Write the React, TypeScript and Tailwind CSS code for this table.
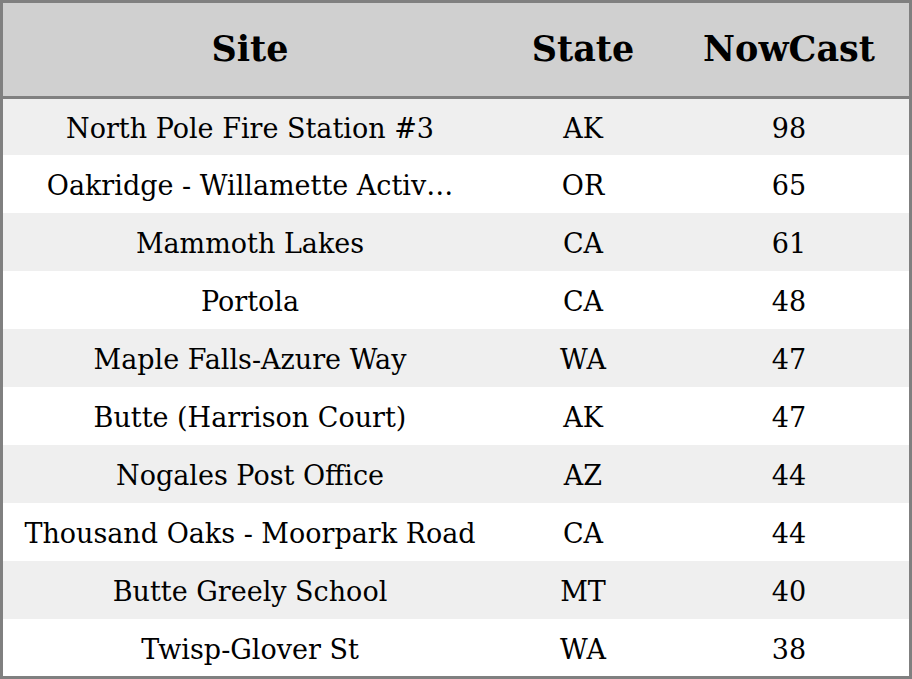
const rows = [
  { site: "North Pole Fire Station #3", state: "AK", value: 98, h: "h-[56px]" },
  { site: "Oakridge - Willamette Activ…", state: "OR", value: 65, h: "h-[58px]" },
  { site: "Mammoth Lakes", state: "CA", value: 61, h: "h-[58px]" },
  { site: "Portola", state: "CA", value: 48, h: "h-[58px]" },
  { site: "Maple Falls-Azure Way", state: "WA", value: 47, h: "h-[58px]" },
  { site: "Butte (Harrison Court)", state: "AK", value: 47, h: "h-[58px]" },
  { site: "Nogales Post Office", state: "AZ", value: 44, h: "h-[58px]" },
  { site: "Thousand Oaks - Moorpark Road", state: "CA", value: 44, h: "h-[58px]" },
  { site: "Butte Greely School", state: "MT", value: 40, h: "h-[58px]" },
  { site: "Twisp-Glover St", state: "WA", value: 38, h: "h-[57px]" },
];

export default function App() {
  return (
    <div className="w-[912px] h-[679px] border-[3px] border-[#808080] bg-white text-black font-['DejaVu_Serif',serif] flex flex-col">
      <div className="grid grid-cols-[494px_172px_240px] h-[93px] bg-[#d0d0d0] border-b-[3px] border-[#808080] items-center text-center text-[35px] font-bold shrink-0 box-content">
        <div>Site</div>
        <div>State</div>
        <div>NowCast</div>
      </div>
      {rows.map((r, i) => (
        <div
          key={i}
          className={`grid grid-cols-[494px_172px_240px] items-center text-center text-[27px] leading-none pt-[3px] shrink-0 ${r.h} ${i % 2 === 0 ? "bg-[#efefef]" : "bg-white"}`}
        >
          <div className="whitespace-nowrap">{r.site}</div>
          <div>{r.state}</div>
          <div>{r.value}</div>
        </div>
      ))}
    </div>
  );
}
